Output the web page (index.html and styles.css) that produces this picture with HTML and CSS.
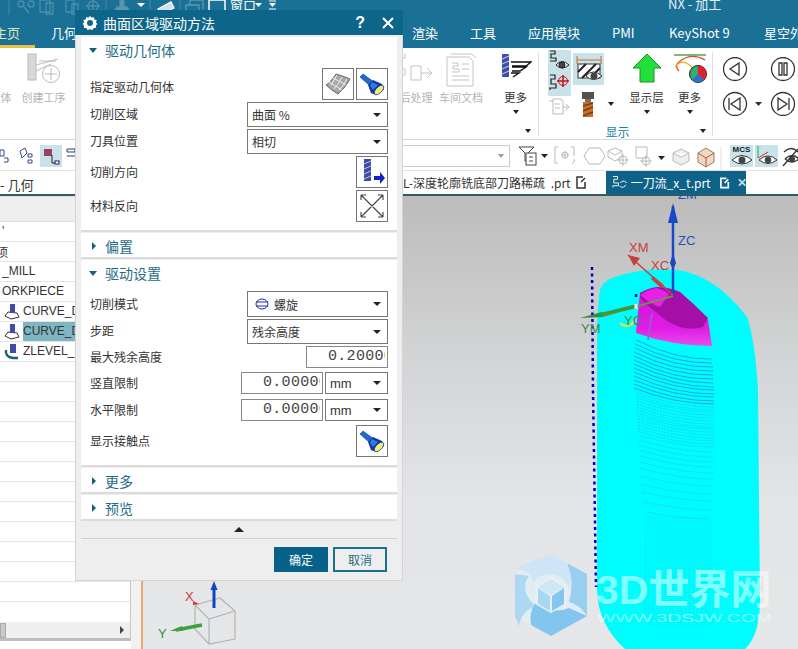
FILE: index.html
```html
<!DOCTYPE html>
<html lang="zh">
<head>
<meta charset="utf-8">
<title>NX - 加工</title>
<link rel="stylesheet" href="styles.css">
</head>
<body>
<div class="app">
  <header class="topbar">
    <div class="qat">
      <svg class="qat-icons" width="300" height="15" viewBox="0 0 300 15" fill="none" stroke="#4d8fac" stroke-width="1.3">
        <path d="M9 0v15M106 0v15M150 0v15M180 0v15" stroke="#3b84a5"/>
        <circle cx="21" cy="4" r="3"/><circle cx="31" cy="4" r="3"/><path d="M24 7l5 6"/>
        <path d="M40 0h10v12h-10zM46 3h7v11h-7z"/><path d="M66 0h8v12h-8zM72 4h6v10h-6z"/><path d="M86 6h14M93 0v13"/><circle cx="93" cy="6" r="5"/>
        <path d="M113 13h18l-4-6h-3v-7h-4v7h-3z" fill="#5b97b2"/><path d="M137 3h8l-4 4z" fill="#fff" stroke="none"/>
        <path d="M158 9l13-7 3 6-13 6z" fill="#cfe0e8" stroke="#fff"/>
        <path d="M186 12v-7h13v7M190 5v-5h13v9" stroke="#5b97b2"/>
        <path d="M209 13v-13h16v13" stroke="#fff" stroke-width="1.5"/>
        <path d="M255 3h7l-3.500 4zM269 3h7l-3.500 4z" fill="#fff" stroke="none"/><path d="M269 1h7M269 9h7" stroke="#fff" stroke-width="1"/>
      </svg>
      <span class="win-label">窗口</span>
      <span class="app-title">NX - 加工</span>
    </div>
    <nav class="tabs">
      <span class="tab tab-home">主页</span>
      <span class="tab tab-geo">几何</span>
      <span class="tab tab-render">渲染</span>
      <span class="tab tab-tools">工具</span>
      <span class="tab tab-app">应用模块</span>
      <span class="tab tab-pmi">PMI</span>
      <span class="tab tab-key">KeyShot 9</span>
      <span class="tab tab-star">星空外</span>
    </nav>
  </header>

  <section class="ribbon">
    <div class="rb-item rb-body"><div class="rb-icon"></div><span class="rb-text faded">体</span></div>
    <div class="rb-item rb-create">
      <div class="rb-icon">
        <svg width="34" height="30" viewBox="0 0 34 30" fill="none" stroke="#bbb"><rect x="1" y="1" width="8" height="26" fill="#d8d8d8"/><path d="M9 12l22-6M9 18l15-7M12 8h17"/><circle cx="24" cy="21" r="8.500" fill="#fff"/><path d="M24 15v12M18 21h12"/></svg>
      </div>
      <span class="rb-text faded">创建工序</span>
    </div>
    <div class="rb-gap"></div>
    <div class="rb-item rb-post">
      <div class="rb-icon">
        <svg width="34" height="28" viewBox="0 0 34 28" fill="none" stroke="#c4c4c4"><path d="M0 1h6v6h-6zM0 18h6v6h-6zM12 15h10v14h-10zM22 22h10M28 17l5 5-5 5" transform="translate(0 -2)"/></svg>
      </div>
      <span class="rb-text faded">后处理</span>
    </div>
    <div class="rb-item rb-doc">
      <div class="rb-icon">
        <svg width="30" height="34" viewBox="0 0 30 34" fill="none" stroke="#c4c4c4"><path d="M1 4h22l4 4v25h-26z" fill="#fff"/><path d="M5 1h21l4 4"/><path d="M6 10h6v3h-5v3h6v3h-7M16 11h7M16 16h7M6 23h17M6 27h17"/></svg>
      </div>
      <span class="rb-text faded">车间文档</span>
    </div>
    <div class="rb-item rb-more">
      <div class="rb-icon">
        <svg width="32" height="26" viewBox="0 0 32 26"><rect x="2" y="1" width="7" height="23" rx="1" fill="#3e4ea8"/><path d="M2 6l7-3M2 11l7-3M2 16l7-3M2 21l7-3" stroke="#b9c2ee" stroke-width="1.200"/><path d="M11 9h20l-5 4h-14M12 14h14l-6 4h-8M11 20h8l-6 4" fill="#fff" stroke="#111" stroke-width="1.400"/></svg>
      </div>
      <span class="rb-text rb-dark">更多</span>
      <i class="caret caret-mid"></i>
      <i class="caret caret-foot"></i>
    </div>
    <div class="rb-sep"></div>
    <div class="rb-group">
      <div class="show-stack">
        <div class="show-on">
          <svg width="23" height="22" viewBox="0 0 23 22" fill="none" stroke="#222"><path d="M2 1h5v3h-4v4h5v3h-6" stroke-width="1.200"/><path d="M8 15q6-7 13 0q-7 6-13 0z" fill="#fff"/><circle cx="14" cy="15" r="3" fill="#444"/></svg>
          <svg width="23" height="22" viewBox="0 0 23 22" fill="none" stroke="#222"><path d="M2 3h5v4h-4v5h5v4h-6v2" stroke-width="1.200"/><circle cx="15" cy="9" r="4.500" stroke="#c11"/><path d="M15 3v12M9 9h12" stroke="#c11" stroke-width="1.500"/></svg>
        </div>
        <svg class="show-faded" width="22" height="18" viewBox="0 0 22 18" fill="none" stroke="#bbb"><path d="M5 1h8l2 3v12h-10zM1 3h4M7 6h5M7 10h5M15 9h5M18 6l3 3-3 3"/></svg>
      </div>
      <div class="show-col2">
        <div class="show-toggle">
          <svg width="32" height="32" viewBox="0 0 32 32" fill="none"><path d="M4 7h24M4 3v8M28 3v8" stroke="#c8682a"/><rect x="5" y="11" width="22" height="14" fill="#fff" stroke="#333"/><path d="M5 19l8-8M9 25l14-14M17 25l10-10" stroke="#222" stroke-width="2"/><path d="M13 23q7-8 16 0q-9 7-16 0z" fill="#fff" stroke="#333"/><circle cx="21" cy="23" r="3.500" fill="#444"/></svg>
        </div>
        <svg class="show-drill" width="18" height="25" viewBox="0 0 18 25"><rect x="3" y="0" width="12" height="7" fill="#58504a"/><rect x="6" y="7" width="6" height="3" fill="#7a7068"/><rect x="4" y="10" width="10" height="15" fill="#c76f2c"/><path d="M4 14l10-3M4 19l10-4M4 24l10-4" stroke="#7b3d12" stroke-width="1.500"/></svg>
      </div>
      <i class="caret caret-drill"></i>
      <div class="rb-item rb-layer">
        <div class="rb-icon">
          <svg width="30" height="30" viewBox="0 0 30 30"><path d="M15 1l14 14h-7v14h-14v-14h-7z" fill="#22e03a" stroke="#1c8f2c"/></svg>
        </div>
        <span class="rb-text rb-dark">显示层</span>
        <i class="caret caret-mid"></i>
      </div>
      <div class="rb-item rb-more2">
        <div class="rb-icon">
          <svg width="34" height="30" viewBox="0 0 34 30" fill="none"><path d="M1 2h32" stroke="#2a8a2a" stroke-width="1.200"/><path d="M32 7q-14-8-26 2q-5 4 0 9" stroke="#d94a2a" stroke-width="1.200"/><path d="M2 14q6-8 13-3q5 3 5 8" stroke="#e3b020" stroke-width="1.200"/><circle cx="25" cy="21" r="8.500" fill="#35ad6c" stroke="#222"/><path d="M25 21v-8.500a8.500 8.500 0 0 1 6 14.500z" fill="#e0202a"/><path d="M25 21l6 6a8.500 8.500 0 0 1-12 0z" fill="#2f6fcf"/></svg>
        </div>
        <span class="rb-text rb-dark">更多</span>
        <i class="caret caret-mid"></i>
      </div>
      <span class="group-label">显示</span>
      <i class="caret caret-foot2"></i>
    </div>
    <div class="rb-sep"></div>
    <div class="rb-nav">
      <svg width="72" height="59" viewBox="0 0 72 59" fill="none" stroke="#333" stroke-width="1.300">
        <circle cx="12" cy="12" r="11.500"/><path d="M16 6v12l-9-6z"/>
        <circle cx="60" cy="12" r="11.500"/><path d="M56 6h3v12h-3zM61 6h3v12h-3z"/>
        <circle cx="12" cy="47" r="11.500"/><path d="M6 41v12M17 41v12l-9-6z"/>
        <path d="M32 45h7l-3.500 4z" fill="#333" stroke="none"/>
        <circle cx="60" cy="47" r="11.500"/><path d="M66 41v12M55 41v12l9-6z"/>
      </svg>
    </div>
  </section>

  <section class="selbar">
    <svg class="sel-left" width="75" height="30" viewBox="0 0 75 30" fill="none">
      <rect x="40" y="5" width="22" height="22" fill="#c9e2ea"/>
      <path d="M0 10h4v6h-4zM4 18h4v4h-4M20 11l5-3 2 5-5 5zM28 14h4v3h-4zM28 20h4v3h-4z" stroke="#334a8a"/>
      <rect x="44" y="9" width="8" height="7" fill="#a04060"/><path d="M52 15v8h4" stroke="#223"/><rect x="55" y="21" width="4" height="3" stroke="#225" fill="#fff"/>
      <path d="M67 9h8v3h-8zM67 16h8" stroke="#246"/>
    </svg>
    <div class="sel-combo"><i class="caret caret-grey"></i></div>
    <svg class="sel-icons" width="285" height="26" viewBox="0 0 285 26" fill="none" stroke="#bbb">
      <path d="M3 3h15l-6 6v8h-3v-8z" stroke="#444" fill="#fff"/><rect x="10" y="9" width="10" height="12" stroke="#444" fill="#fff"/><path d="M13 13h4M13 17h4" stroke="#444"/>
      <path d="M25 10h7l-3.500 4z" fill="#222" stroke="none"/>
      <path d="M42 3h-3v16h3M55 3h3v9M45 11h8M49 7v8"/><circle cx="49" cy="11" r="3"/><path d="M58 15q2 3-2 5"/>
      <path d="M68 12l5-8h11l5 8-5 8h-11z"/>
      <path d="M92 7l7-3 7 3v6l-7 4-7-4zM92 7l7 4 7-4"/><circle cx="107" cy="16" r="4"/><path d="M107 10v12M101 16h12"/>
      <path d="M120 3h11v11h-11zM131 14"/><circle cx="130" cy="17" r="4"/><path d="M130 11v12M124 17h12"/>
      <path d="M142 12h7l-3.500 4z" fill="#222" stroke="none"/>
      <path d="M157 9l8-4 8 4v8l-8 4-8-4zM157 9l8 4 8-4" fill="#eee"/>
      <path d="M182 9l8-5 8 5v9l-8 5-8-5z" fill="#f0d9c4" stroke="#a07a60"/><path d="M182 9l8 5 8-5M190 14v9" stroke="#b05a30"/>
      <path d="M205 3v23" stroke="#ddd"/>
    </svg>
    <div class="sel-on">
      <span class="mcs">MCS</span>
      <svg width="22" height="12" viewBox="0 0 22 12"><path d="M1 6q10-9 20 0q-10 8-20 0z" fill="#fff" stroke="#333"/><circle cx="11" cy="6" r="3.500" fill="#444"/></svg>
    </div>
    <div class="sel-on sel-eye">
      <svg width="23" height="22" viewBox="0 0 23 22" fill="none"><path d="M3 1v12" stroke="#2a6"/><path d="M3 13l10-6" stroke="#c33"/><path d="M4 15q9-8 18 0q-9 7-18 0z" fill="#fff" stroke="#333"/><circle cx="13" cy="15" r="3.200" fill="#444"/></svg>
    </div>
    <svg class="sel-last" width="17" height="24" viewBox="0 0 17 24" fill="none" stroke="#333"><path d="M1 21l15-17M2 7q7-7 14 0M3 14q7-7 14 0M3 14q7 6 14 0" stroke-width="1.300"/><circle cx="10" cy="14" r="2.500" fill="#444"/></svg>
  </section>

  <section class="filetabs">
    <span class="crumb">- 几何</span>
    <span class="file-name">L-深度轮廓铣底部刀路稀疏 .prt</span>
    <svg class="file-mark" width="12" height="13" viewBox="0 0 12 13" fill="none" stroke="#333" stroke-width="1.500"><path d="M8 1h-6v11h8v-6"/><path d="M6 6l4-4"/></svg>
    <div class="file-active">
      <svg width="17" height="15" viewBox="0 0 17 15" fill="none" stroke="#fff"><path d="M1 1h5v3h-4v4h5v3h-6v2M9 8a4 4 0 0 1 6-1l1 1M15 10a4 4 0 0 1-6 2l-1-1"/></svg>
      <span>一刀流_x_t.prt</span>
      <svg class="tab-edit" width="11" height="12" viewBox="0 0 11 12" fill="none" stroke="#fff" stroke-width="1.800"><path d="M7 1h-6v10h8v-6"/><path d="M5 6l4-4"/></svg>
      <svg class="tab-close" width="9" height="9" viewBox="0 0 9 9" stroke="#c5dbe4" stroke-width="2"><path d="M1 1l7 7M8 1l-7 7"/></svg>
    </div>
  </section>

  <main class="workspace">
    <aside class="navigator">
      <div class="nav-head"></div>
      <div class="nav-row">'</div>
      <div class="nav-row nav-clip">项</div>
      <div class="nav-row">_MILL</div>
      <div class="nav-row">ORKPIECE</div>
      <div class="nav-row nav-op">
        <svg width="17" height="17" viewBox="0 0 17 17"><path d="M4 9l-3 4 6 3 8-2-2-4z" fill="#fff" stroke="#333"/><rect x="6" y="1" width="5" height="9" fill="#3e4ea8"/></svg>
        <span>CURVE_D</span>
      </div>
      <div class="nav-row nav-op">
        <svg width="17" height="17" viewBox="0 0 17 17"><path d="M4 9l-3 4 6 3 8-2-2-4z" fill="#fff" stroke="#333"/><rect x="6" y="1" width="5" height="9" fill="#3e4ea8"/></svg>
        <span class="nav-sel">CURVE_D</span>
      </div>
      <div class="nav-row nav-op">
        <svg width="17" height="17" viewBox="0 0 17 17"><path d="M2 7q-1 7 7 8h5" fill="none" stroke="#17607a" stroke-width="2.500"/><rect x="6" y="1" width="6" height="9" fill="#3e4ea8"/></svg>
        <span>ZLEVEL_P</span>
      </div>
      <div class="nav-row"></div><div class="nav-row"></div><div class="nav-row"></div><div class="nav-row"></div>
      <div class="nav-row"></div><div class="nav-row"></div><div class="nav-row"></div><div class="nav-row"></div>
      <div class="nav-row"></div><div class="nav-row"></div><div class="nav-row"></div><div class="nav-row"></div>
      <div class="nav-scroll"><i class="thumb"></i><i class="scroll-arrow"></i></div>
    </aside>
    <div class="sash"></div>
    <div class="viewport">
      <svg class="scene" width="655" height="453" viewBox="143 196 655 453">
        <defs>
          <linearGradient id="side" x1="0" y1="0" x2="0" y2="1"><stop offset="0" stop-color="#d014d8"/><stop offset=".7" stop-color="#e01ce4"/><stop offset="1" stop-color="#e84cec"/></linearGradient>
          <pattern id="rings" width="4" height="2" patternUnits="userSpaceOnUse"><path d="M0 .5h3" stroke="#1a9fe0" stroke-width=".6"/></pattern>
        </defs>
        <path d="M597 590q1 35 28 59h120q15-14 15-49l-2-210q-3-50-11-73q-32-42-70-47q-35-3-65 8q-10 4-12 12q-3 18-3 50z" fill="#00fdfd"/>
        <path d="M645 515h66l3 110h-72z" fill="url(#rings)" opacity=".22"/>
        <g fill="none" stroke="#2f7fd8" stroke-width=".7">
          <path d="M636 340q40 20 76 19M635 344q40 20 77 19M635 348q40 20 78 19M634 352q40 20 79 19M634 356q40 20 79 19M634 360q40 20 79 19M634 364q40 19 79 19M634 368q40 19 80 19M634 372q40 18 80 18M634 376q40 18 80 18M634 380q40 17 80 17M634 384q40 17 80 17M634 388q40 16 80 16"/>
        </g>
        <g fill="none" stroke="#3aa0e8" stroke-width=".5" stroke-dasharray="2 1">
          <path d="M636 392q40 15 78 15M636 395q40 15 78 15M637 398q40 14 77 14M637 401q40 14 77 14M637 404q40 14 77 14M637 407q40 14 77 14M637 410q40 14 77 14M637 413q40 14 77 14M638 416q40 13 76 13M638 419q40 13 76 13M638 422q40 13 76 13M638 425q40 13 76 13M638 428q40 13 76 13M638 431q40 13 76 13M639 435q40 12 75 12M639 440q40 12 75 12M639 445q40 12 75 12M639 450q40 12 75 12M640 456q40 11 74 11M640 462q40 11 74 11M640 468q40 11 74 11M641 476q40 10 72 10M641 484q40 10 72 10M642 492q40 9 70 9M643 502q40 8 68 8M645 512q40 7 64 7"/>
        </g>
        <path d="M640 293l-4 40q36 13 76 13l-4-26-28-28-23-5z" fill="url(#side)"/>
        <path d="M640 293q8-5 17-6q12 0 23 5q14 12 28 26l-5 9q-12 3-23 0q-14-5-23-14q-9-6-17-15z" fill="#a50fa8"/>
        <path d="M640 295q6-5 17-7q7 2 12 6l-9 13q-8-2-20-12z" fill="#e620e6"/>
        <path d="M652 313l-4 27" stroke="#8a6cc8" stroke-width="1.500"/>
        <path d="M592 267l1 123 3 197" stroke="#0000c8" stroke-width="2.500" stroke-dasharray="3 3.500" fill="none"/>
        <path d="M636 294v3" stroke="#0000c8" stroke-width="2.500"/>
        <path d="M673 296v-90" stroke="#1848c8" stroke-width="2.500"/>
        <path d="M673 203l-5 20h10zM673 253l-3 10 3 7 3-7z" fill="#1848c8"/>
        <path d="M673 295l-45-40" stroke="#c8403c" stroke-width="1.500"/>
        <path d="M628 255l12 3-6 8zM653 276l11 9-3 3-10-9z" fill="#c8403c"/>
        <path d="M673 296l-70 20" stroke="#7a8a5a" stroke-width="2"/>
        <path d="M580 318l22-6 1 5z" fill="#2f8f30"/><path d="M600 316l37-8 0-4-37 9z" fill="#3a9a3a"/>
        <path d="M636 304v5" stroke="#eee" stroke-width="3"/>
        <path d="M620 323q5 5 10 2q4-2 5-7" fill="none" stroke="#efe040" stroke-width="2"/>
        <text x="629" y="252" class="axis axis-red">XM</text>
        <text x="651" y="270" class="axis axis-red">XC</text>
        <text x="678" y="245" class="axis axis-blue">ZC</text>
        <text x="678" y="199" class="axis axis-blue">ZM</text>
        <text x="581" y="333" class="axis axis-green">YM</text>
        <text x="624" y="325" class="axis axis-green">YC</text>

        <g fill="none" stroke="#b5b5b5" stroke-width="1.200">
          <path d="M195 605l25-7 15 13v28l-26 5-14-15zM195 605l14 14 26-8M209 619v25"/>
        </g>
        <path d="M214 608v-20" stroke="#0f46c0" stroke-width="3"/><path d="M214 581l-3.500 9h7z" fill="#0f46c0"/>
        <path d="M202 625l-26 5" stroke="#3fa03f" stroke-width="3.500"/><path d="M170 631l12-5 1 5z" fill="#3fa03f"/>
        <path d="M193 601l6 3-6 1z" fill="#d03a3a"/>
        <text x="185" y="601" class="axis-sm axis-red">X</text>
        <text x="158" y="638" class="axis-sm axis-green">Y</text>

        <g class="logo">
          <path d="M551 554l36 20v42l-36 20-36-20v-42z" fill="#e2edf3"/>
          <path d="M551 554l14 8q8 12 4 26q-6-14-18-14q-12 0-18 8q-3-10-4-8q-4-4-14-6z" fill="#cde5f6"/>
          <path d="M567 563l20 11v42q-8-12-18-14q6-20-2-39z" fill="#98cff0"/>
          <path d="M535 603q16 12 34 5l18 8-36 20-20-11q-2-14 4-22z" fill="#82c5ef"/>
          <path d="M515 574l14 2q-10 14 6 30q-14 6-16 20l-4-10z" fill="#acd8f3"/>
          <path d="M551 577l16 9v18l-16 9-16-9v-18z" fill="#e8f0f4"/>
          <path d="M551 579l13 8-13 8-13-8z" fill="#cfe6f6"/>
          <path d="M538 588l12 8v15l-12-7z" fill="#a9d6f3"/>
          <path d="M564 588v16l-12 7v-15z" fill="#84c6ef"/>
        </g>
        <text x="596" y="604" class="wm-title">3D世界网</text>
        <text x="597" y="622" class="wm-url" textLength="175" lengthAdjust="spacingAndGlyphs">WWW.3DSJW.COM</text>
      </svg>
    </div>
  </main>

  <div class="dialog">
    <div class="dlg-title">
      <svg width="16" height="16" viewBox="0 0 16 16"><path d="M8 .8l1.400 2 2.300-.7.700 2.300 2.300.7-.7 2.300 1.400 1.600-1.400 1.600.1 2.200-2.400.3-1.300 2-2.400-.8-2.400.8-1.300-2-2.400-.3.100-2.200-1.400-1.600 1.400-1.600-.7-2.300 2.300-.7.700-2.300 2.300.7z" fill="#fff"/><circle cx="8" cy="8" r="3" fill="#0e658a"/></svg>
      <span class="dlg-name">曲面区域驱动方法</span>
      <span class="dlg-help">?</span>
      <svg class="dlg-x" width="12" height="12" viewBox="0 0 12 12" stroke="#fff" stroke-width="2"><path d="M1 1l10 10M11 1l-10 10"/></svg>
    </div>
    <div class="dlg-body">
      <section class="panel">
        <h2 class="panel-head"><i class="tri-down"></i>驱动几何体</h2>
        <div class="rows">
          <div class="row row-btn">
            <span class="lbl lbl-low">指定驱动几何体</span>
            <button class="ico-btn">
              <svg width="26" height="22" viewBox="0 0 26 22"><path d="M1 12q4-2 10-11q7 2 14 5q-4 8-12 15q-7-4-12-9z" fill="#a9a9a9" stroke="#666"/><path d="M4 9l13 8M8 5l13 7M12 2l-6 10M17 4q-3 7-8 12M22 6q-3 6-8 11" fill="none" stroke="#eee"/></svg>
            </button>
            <button class="ico-btn">
              <svg width="28" height="26" viewBox="0 0 28 26"><path d="M2 6l3-3 11 8-4 4z" fill="#1c6bd0" stroke="#0f3a90" stroke-width=".6"/><path d="M15 9l9 4 2 5-8 6-5-2-3-8z" fill="#1536a8"/><path d="M14 11l6 3-5 5-3-4z" fill="#2b7be0"/><ellipse cx="21" cy="19" rx="6" ry="3" transform="rotate(-45 21 19)" fill="#f4ec70" stroke="#1536a8" stroke-width=".8"/></svg>
            </button>
          </div>
          <div class="row">
            <span class="lbl">切削区域</span>
            <div class="select sel-wide">曲面 %<i class="caret caret-sel"></i></div>
          </div>
          <div class="row">
            <span class="lbl">刀具位置</span>
            <div class="select sel-wide">相切<i class="caret caret-sel"></i></div>
          </div>
          <div class="row row-btn">
            <span class="lbl">切削方向</span>
            <button class="ico-btn">
              <svg width="26" height="28" viewBox="0 0 26 28"><rect x="5" y="1" width="7" height="22" fill="#3e4ea8"/><path d="M5 6l7-3M5 11l7-3M5 16l7-3M5 21l7-3" stroke="#b9c2ee"/><path d="M15 18h6v-4l5 6-5 6v-4h-6z" fill="#1220c8"/></svg>
            </button>
          </div>
          <div class="row row-btn">
            <span class="lbl">材料反向</span>
            <button class="ico-btn">
              <svg width="26" height="26" viewBox="0 0 26 26" fill="none" stroke="#444" stroke-width="1.100"><path d="M2 2l22 22M24 2l-22 22M2 2v5M2 2h5M24 2v5M24 2h-5M2 24v-5M2 24h5M24 24v-5M24 24h-5"/></svg>
            </button>
          </div>
        </div>
      </section>
      <section class="panel panel-closed">
        <h2 class="panel-head"><i class="tri-right"></i>偏置</h2>
      </section>
      <section class="panel panel-drive">
        <h2 class="panel-head"><i class="tri-down"></i>驱动设置</h2>
        <div class="rows">
          <div class="row row-26">
            <span class="lbl">切削模式</span>
            <div class="select sel-wide">
              <svg class="spiral" width="14" height="12" viewBox="0 0 14 12" fill="none" stroke="#2222aa"><ellipse cx="7" cy="6" rx="6" ry="5"/><path d="M1 4h12M1 8h12"/></svg>
              螺旋<i class="caret caret-sel"></i>
            </div>
          </div>
          <div class="row">
            <span class="lbl">步距</span>
            <div class="select sel-wide">残余高度<i class="caret caret-sel"></i></div>
          </div>
          <div class="row row-22">
            <span class="lbl">最大残余高度</span>
            <div class="num">0.20000</div>
          </div>
          <div class="row row-22 row-lim">
            <span class="lbl">竖直限制</span>
            <div class="num">0.00000</div>
            <div class="select sel-unit">mm<i class="caret caret-sel"></i></div>
          </div>
          <div class="row row-22 row-lim2">
            <span class="lbl">水平限制</span>
            <div class="num">0.00000</div>
            <div class="select sel-unit">mm<i class="caret caret-sel"></i></div>
          </div>
          <div class="row row-btn row-lim">
            <span class="lbl">显示接触点</span>
            <button class="ico-btn">
              <svg width="28" height="26" viewBox="0 0 28 26"><path d="M2 6l3-3 11 8-4 4z" fill="#1c6bd0" stroke="#0f3a90" stroke-width=".6"/><path d="M15 9l9 4 2 5-8 6-5-2-3-8z" fill="#1536a8"/><path d="M14 11l6 3-5 5-3-4z" fill="#2b7be0"/><ellipse cx="21" cy="19" rx="6" ry="3" transform="rotate(-45 21 19)" fill="#f4ec70" stroke="#1536a8" stroke-width=".8"/></svg>
            </button>
          </div>
        </div>
      </section>
      <section class="panel panel-closed">
        <h2 class="panel-head"><i class="tri-right"></i>更多</h2>
      </section>
      <section class="panel panel-closed">
        <h2 class="panel-head"><i class="tri-right"></i>预览</h2>
      </section>
      <div class="collapse"><i class="tri-up"></i></div>
      <div class="dlg-foot">
        <button class="btn btn-ok">确定</button>
        <button class="btn btn-cancel">取消</button>
      </div>
    </div>
  </div>
</div>
</body>
</html>
```

FILE: styles.css
```css
* { box-sizing: border-box; }
html, body { margin: 0; padding: 0; }
body {
  width: 798px;
  height: 649px;
  overflow: hidden;
  background: #fff;
  font-family: "Noto Sans CJK SC", "Noto Sans", sans-serif;
  font-size: 12px;
  color: #333;
}
.app { position: relative; width: 798px; height: 649px; overflow: hidden; display: flex; flex-direction: column; }

/* top */
.topbar { height: 48px; background: #1b7096; color: #fff; flex: none; }
.qat { height: 20px; display: flex; align-items: flex-start; overflow: hidden; }
.qat-icons { flex: none; display: block; }
.win-label { margin: -4px 0 0 -70px; width: 70px; font-size: 13px; line-height: 18px; }
.app-title { margin: -5px 0 0 368px; font-size: 13px; line-height: 18px; color: #e5f0f5; }
.tabs { height: 28px; display: flex; font-size: 13px; line-height: 26px; }
.tab { flex: none; }
.tab-home { width: 41px; border-bottom: 3px solid #e8c044; color: #d8e6b8; margin-left: -6px; }
.tab-geo { margin-left: 16px; width: 361px; }
.tab-render { width: 58px; }
.tab-tools { width: 58px; }
.tab-app { width: 84px; }
.tab-pmi { width: 57px; }
.tab-key { width: 95px; }
.tab-star { width: 60px; white-space: nowrap; }

/* ribbon */
.ribbon { height: 92px; flex: none; display: flex; background: #fff; border-bottom: 1px solid #d8d8d8; position: relative; }
.rb-item { position: relative; flex: none; display: flex; flex-direction: column; align-items: center; }
.rb-icon { height: 41px; padding-top: 5px; display: flex; justify-content: center; align-items: flex-start; }
.rb-text { font-size: 11px; line-height: 16px; white-space: nowrap; }
.rb-dark { font-size: 11.500px; }
.faded { color: #b4b4b4; }
.rb-body { width: 12px; }
.rb-create { width: 45px; margin-left: 9px; }
.rb-gap { width: 330px; flex: none; }
.rb-post { width: 40px; }
.rb-doc { width: 48px; margin-left: 1px; }
.rb-more { width: 44px; margin-left: 8.500px; }
.rb-sep { width: 1px; height: 84px; margin: 4px 0 0 0; background: #e0e0e0; flex: none; }
.caret { display: block; width: 0; height: 0; border-left: 3.500px solid transparent; border-right: 3.500px solid transparent; border-top: 4px solid #222; }
.caret-mid { margin-top: 5px; }
.caret-foot { position: absolute; right: 7px; top: 81px; }
.rb-group { position: relative; width: 173px; flex: none; display: flex; }
.show-stack { margin: 2px 0 0 9px; width: 23px; flex: none; display: flex; flex-direction: column; align-items: center; }
.show-on { width: 23px; height: 46px; background: #c9e2ea; display: flex; flex-direction: column; }
.show-faded { margin-top: 2px; }
.show-col2 { margin: 5px 0 0 2px; width: 31px; flex: none; display: flex; flex-direction: column; align-items: center; }
.show-toggle { width: 31px; height: 32px; background: #c9e2ea; }
.show-drill { margin-top: 7px; }
.caret-drill { margin: 54px 0 0 4px; flex: none; }
.rb-layer { width: 44px; margin-left: 11px; }
.rb-more2 { width: 44px; margin-left: -1px; }
.group-label { position: absolute; left: 67px; top: 75px; color: #1c7fa6; font-size: 12px; line-height: 18px; }
.caret-foot2 { position: absolute; left: 161px; top: 81px; }
.rb-nav { margin: 9px 0 0 10px; flex: none; }

/* selection bar */
.selbar { height: 31px; flex: none; display: flex; align-items: flex-start; background: #fff; border-bottom: 1px solid #e2e2e2; }
.sel-left { flex: none; }
.sel-combo { flex: none; margin: 5px 0 0 325px; width: 110px; height: 22px; border: 1px solid #ccc; position: relative; display: flex; justify-content: flex-end; align-items: center; padding-right: 5px; }
.caret-grey { border-top-color: #999; }
.sel-icons { flex: none; margin: 4px 0 0 6px; }
.sel-on { flex: none; width: 23px; height: 22px; margin: 5px 0 0 -71px; background: #c9e2ea; display: flex; flex-direction: column; align-items: center; }
.mcs { font-family: "Liberation Sans", sans-serif; font-size: 8px; line-height: 9px; font-weight: 700; color: #222; }
.sel-eye { margin-left: 2px; }
.sel-last { flex: none; margin: 5px 0 0 4px; }

/* file tabs */
.filetabs { height: 25px; flex: none; display: flex; align-items: center; background: #fff; border-bottom: 2px solid #2c5d66; position: relative; }
.crumb { font-size: 13px; color: #333; width: 403px; flex: none; padding-top: 3px; }
.file-name { flex: none; width: 172px; font-size: 12px; white-space: pre; word-spacing: 3px; }
.file-mark { flex: none; margin-left: 0; }
.file-active { flex: none; margin-left: 19px; width: 140px; height: 23px; background: #0e6187; color: #fff; display: flex; align-items: center; padding-left: 6px; font-size: 12px; white-space: nowrap; gap: 3px; }
.tab-edit { margin-left: 6px; }
.tab-close { margin-left: 5px; }

/* workspace */
.workspace { flex: 1; display: flex; min-height: 0; }
.navigator { width: 131px; flex: none; height: 445px; background: #fff; border-right: 1px solid #c8c8c8; border-bottom: 3px solid #bdbdbd; display: flex; flex-direction: column; font-family: "Liberation Sans", sans-serif; overflow: hidden; }
.nav-head { height: 26px; background: #efefef; border-top: 1px solid #ddd; border-bottom: 1px solid #ddd; flex: none; }
.nav-row { height: 20px; flex: none; border-bottom: 1px solid #e6e6e6; line-height: 19px; font-size: 12px; white-space: nowrap; padding-left: 2px; display: flex; align-items: center; }
.nav-clip { font-family: "Noto Sans CJK SC", sans-serif; margin-left: -6px; }
.nav-op { padding-left: 4px; gap: 2px; }
.nav-sel { background: #7fb6c4; flex: 1; line-height: 19px; }
.nav-scroll { height: 16px; flex: none; margin-top: auto; background: #efefef; position: relative; display: flex; align-items: center; justify-content: space-between; padding-right: 6px; }
.thumb { display: block; width: 6px; height: 15px; background: #c9c9c9; border: 1px solid #aaa; }
.scroll-arrow { display: block; width: 0; height: 0; border-top: 4px solid transparent; border-bottom: 4px solid transparent; border-left: 4px solid #444; }
.sash { width: 12px; flex: none; background: #f2f2f2; border-right: 2px solid #e8a878; }
.viewport { flex: 1; background: linear-gradient(#bcbcbc 0, #d4d5d6 170px, #e3e4e6 300px, #e6e7e9 100%); overflow: hidden; }
.scene { display: block; }
.axis { font-family: "Liberation Sans", sans-serif; font-size: 13px; }
.axis-sm { font-family: "Liberation Sans", sans-serif; font-size: 13px; }
.axis-red { fill: #c8403c; }
.axis-blue { fill: #2450c0; }
.axis-green { fill: #3a8a4a; }
.wm-title { font-family: "Liberation Sans", "Noto Sans CJK SC", sans-serif; font-size: 41px; font-weight: 700; fill: #fff; fill-opacity: .5; }
.wm-url { font-family: "Liberation Sans", sans-serif; font-size: 11.500px; fill: #fff; fill-opacity: .5; }

/* dialog */
.dialog { position: absolute; left: 75px; top: 10px; width: 328px; height: 571px; background: #eeeeee; border: 1px solid #d4d4d4; border-top: 0; display: flex; flex-direction: column; }
.dlg-title { height: 25px; flex: none; margin: 0 -1px; background: #0e658a; color: #fff; display: flex; align-items: center; padding: 0 9px 0 7px; }
.dlg-name { font-size: 14px; margin-left: 5px; flex: 1; }
.dlg-help { font: 700 16px "Liberation Sans", sans-serif; margin-right: 17px; }
.dlg-x { flex: none; }
.dlg-body { flex: 1; padding: 2px 5px 0; display: flex; flex-direction: column; }
.panel { background: #fff; border-bottom: 2px solid #dcdcdc; padding: 0 9px 8px; margin-bottom: 1px; }
.panel-head { margin: 0; height: 28px; padding-bottom: 2px; font-weight: 400; font-size: 14px; color: #1f6d85; display: flex; align-items: center; line-height: 26px; }
.rows { padding-top: 3px; display: flex; flex-direction: column; gap: 2px; }
.row { display: flex; align-items: center; height: 25px; gap: 2px; }
.row-btn { height: 32px; }
.row-26 { height: 26px; }
.row-22 { height: 22px; }
.row-lim { margin-top: 2px; }
.row-lim2 { margin-top: 3px; }
.lbl { flex: 1; font-size: 12px; color: #333; white-space: nowrap; padding-bottom: 2px; }
.lbl-low { padding: 4px 0 0; }
.ico-btn { width: 32px; height: 32px; padding: 0; background: #fff; border: 1px solid #777; display: flex; align-items: center; justify-content: center; flex: none; }
.select { height: 100%; border: 1px solid #777; background: #fff; display: flex; align-items: center; padding-left: 4px; flex: none; position: relative; font-size: 12px; color: #333; }
.sel-wide { width: 141px; }
.sel-unit { width: 63px; padding-left: 4px; font-family: "Liberation Sans", sans-serif; font-size: 13px; }
.caret-sel { margin-left: auto; margin-right: 6px; border-left-width: 4px; border-right-width: 4px; border-top-width: 4px; }
.spiral { margin: 0 5px 0 3px; }
.num { position: relative; width: 82px; height: 100%; border: 1px solid #888; background: #fff; flex: none; overflow: hidden; font-family: "Liberation Mono", monospace; font-size: 15px; line-height: 20px; text-align: left; white-space: nowrap; color: #444; letter-spacing: .300px; padding-left: 21px; }
.num::after { content: ""; position: absolute; right: 0; top: 0; bottom: 0; width: 2px; background: #fff; }
.panel-closed { padding-bottom: 0; height: 26px; }
.panel-closed .panel-head { height: 24px; padding: 2px 0 0; }
.tri-down { display: block; flex: none; width: 0; height: 0; margin: 0 8px 0 -1px; border-left: 4.500px solid transparent; border-right: 4.500px solid transparent; border-top: 5px solid #17607a; }
.tri-right { display: block; flex: none; width: 0; height: 0; margin: 0 9px 0 2px; border-top: 4.500px solid transparent; border-bottom: 4.500px solid transparent; border-left: 4px solid #17607a; }
.tri-up { display: block; width: 0; height: 0; border-left: 5px solid transparent; border-right: 5px solid transparent; border-bottom: 5px solid #222; }
.collapse { height: 18px; flex: none; display: flex; justify-content: center; align-items: center; border-bottom: 1px solid #d0d0d0; margin-top: -1px; }
.dlg-foot { display: flex; justify-content: flex-end; gap: 5px; padding: 8px 10px 0 0; }
.btn { width: 54px; height: 25px; padding: 0; font-family: inherit; font-size: 12px; line-height: 20px; }
.btn-ok { background: #07628a; color: #fff; border: 0; }
.btn-cancel { background: #eeeeee; color: #1f6d85; border: 2px solid #1b6f8f; }
```
